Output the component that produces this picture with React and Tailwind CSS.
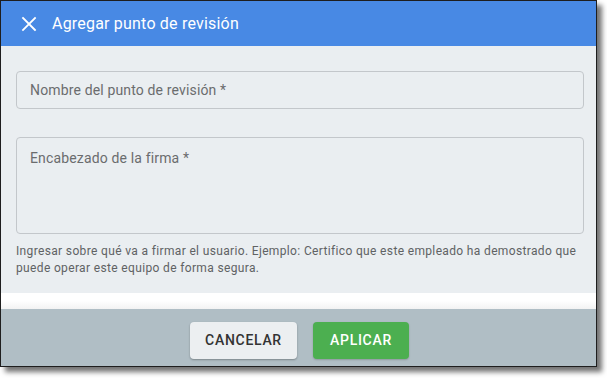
export default function App() {
  return (
    <div className="w-[607px] h-[378px] bg-white font-['Roboto',sans-serif]">
      <div className="w-[597px] h-[367px] border border-[#1e1e1e] flex flex-col shadow-[5px_5px_5px_rgba(0,0,0,0.55)]">
        <div className="h-[45px] bg-[#4889e4] flex items-center shrink-0">
          <svg className="ml-[20px]" width="16" height="16" viewBox="0 0 16 16" fill="none">
            <path d="M2 2L14 14M14 2L2 14" stroke="white" strokeWidth="1.8" strokeLinecap="square" />
          </svg>
          <span className="ml-[15px] text-white text-[16px] tracking-[0.2px]">Agregar punto de revisión</span>
        </div>
        <div className="h-[247px] bg-[#eaeef1] pl-[15px] pr-[12px] pt-[25px] shrink-0">
          <div className="h-[38px] border border-[#c3c7cb] rounded-[4px] flex items-center pl-[13px] text-[14px] tracking-[0.15px] text-[#6a6c6e]">
            Nombre del punto de revisión *
          </div>
          <div className="mt-[28px] h-[97px] border border-[#c3c7cb] rounded-[4px] pl-[13px] pt-[10px] text-[14px] leading-[20px] tracking-[0.15px] text-[#6a6c6e]">
            Encabezado de la firma *
          </div>
          <p className="mt-[9px] text-[12px] leading-[17px] text-[#606264] tracking-[0.35px]">
            Ingresar sobre qué va a firmar el usuario. Ejemplo: Certifico que este empleado ha demostrado que puede operar este equipo de forma segura.
          </p>
        </div>
        <div className="h-[16px] bg-gradient-to-b from-white via-white to-[#f3f3f3] shrink-0" />
        <div className="flex-1 bg-[#b0bec5] flex justify-center items-start pt-[13px] gap-[16px] pl-[2px]">
          <button className="w-[107px] h-[37px] rounded-[4px] bg-[#eceff1] text-[#333333] text-[14px] font-medium tracking-[0.7px] shadow-[0_1px_2px_rgba(0,0,0,0.3)]">
            CANCELAR
          </button>
          <button className="w-[96px] h-[37px] rounded-[4px] bg-[#4caf50] text-white text-[14px] font-medium tracking-[0.7px] shadow-[0_1px_2px_rgba(0,0,0,0.2)]">
            APLICAR
          </button>
        </div>
      </div>
    </div>
  );
}
